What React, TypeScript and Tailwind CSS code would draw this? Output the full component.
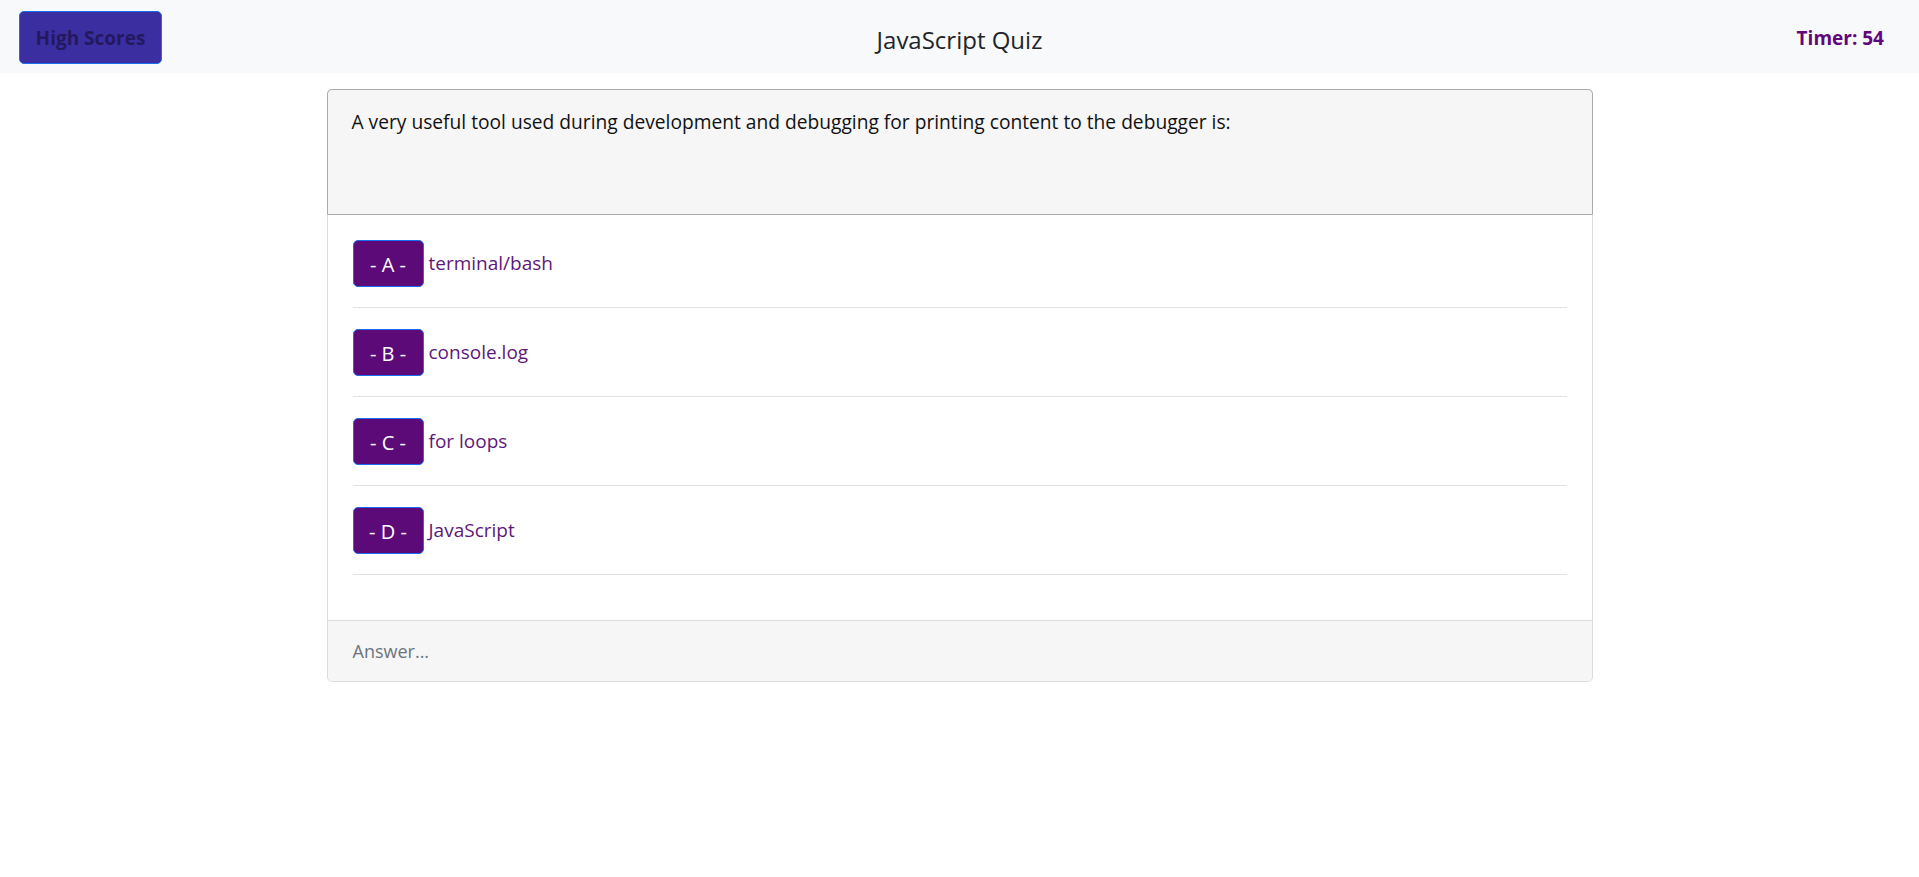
const answers = [
  { letter: "A", text: "terminal/bash" },
  { letter: "B", text: "console.log" },
  { letter: "C", text: "for loops" },
  { letter: "D", text: "JavaScript" },
];

export default function App() {
  return (
    <div
      className="min-h-screen bg-white text-[#212529]"
      style={{ fontFamily: '"Open Sans", "Noto Sans", sans-serif' }}
    >
      {/* Navbar */}
      <nav className="grid grid-cols-3 items-center h-[73px] bg-[#f8f9fa] px-[19px]">
        <div className="pt-[2px]">
          <button className="h-[53px] w-[143px] rounded-[5px] border border-[#1a6cf0] bg-[#3a2ea0] pt-[2px] text-[19px] font-bold text-[#24195e]">
            High Scores
          </button>
        </div>
        <h1 className="text-center text-[24px] text-[#212529] pt-[6px]">
          JavaScript Quiz
        </h1>
        <div className="text-right pr-[16px] pt-[4px] text-[19px] font-bold text-[#62067c]">
          Timer: 54
        </div>
      </nav>

      {/* Quiz card */}
      <main className="flex justify-center pt-[16px]">
        <div className="w-[1266px] rounded-[5px] border border-[#dcdcdc] bg-white">
          <div className="h-[126px] rounded-t-[5px] border border-[#aaaaaa] bg-[#f6f6f6] px-[24px] pt-[18px] -m-px mb-0">
            <p className="text-[19.2px] text-[#111]">
              A very useful tool used during development and debugging for
              printing content to the debugger is:
            </p>
          </div>

          <ul className="px-[25px] pt-[4px] pb-[45px]">
            {answers.map((a) => (
              <li
                key={a.letter}
                className="flex items-center gap-[5px] border-b border-[#e2e2e2] pt-[21px] pb-[20px]"
              >
                <button className="h-[47px] w-[71px] rounded-[5px] border border-[#1a6cf0] bg-[#5c0a78] pt-[2px] text-[20px] text-white">
                  - {a.letter} -
                </button>
                <span className="text-[19px] text-[#5e1878]">{a.text}</span>
              </li>
            ))}
          </ul>

          <div className="h-[61px] rounded-b-[5px] border-t border-[#dcdcdc] bg-[#f6f6f6] px-[25px] flex items-center">
            <span className="text-[18px] text-[#6c757d]">Answer...</span>
          </div>
        </div>
      </main>
    </div>
  );
}
